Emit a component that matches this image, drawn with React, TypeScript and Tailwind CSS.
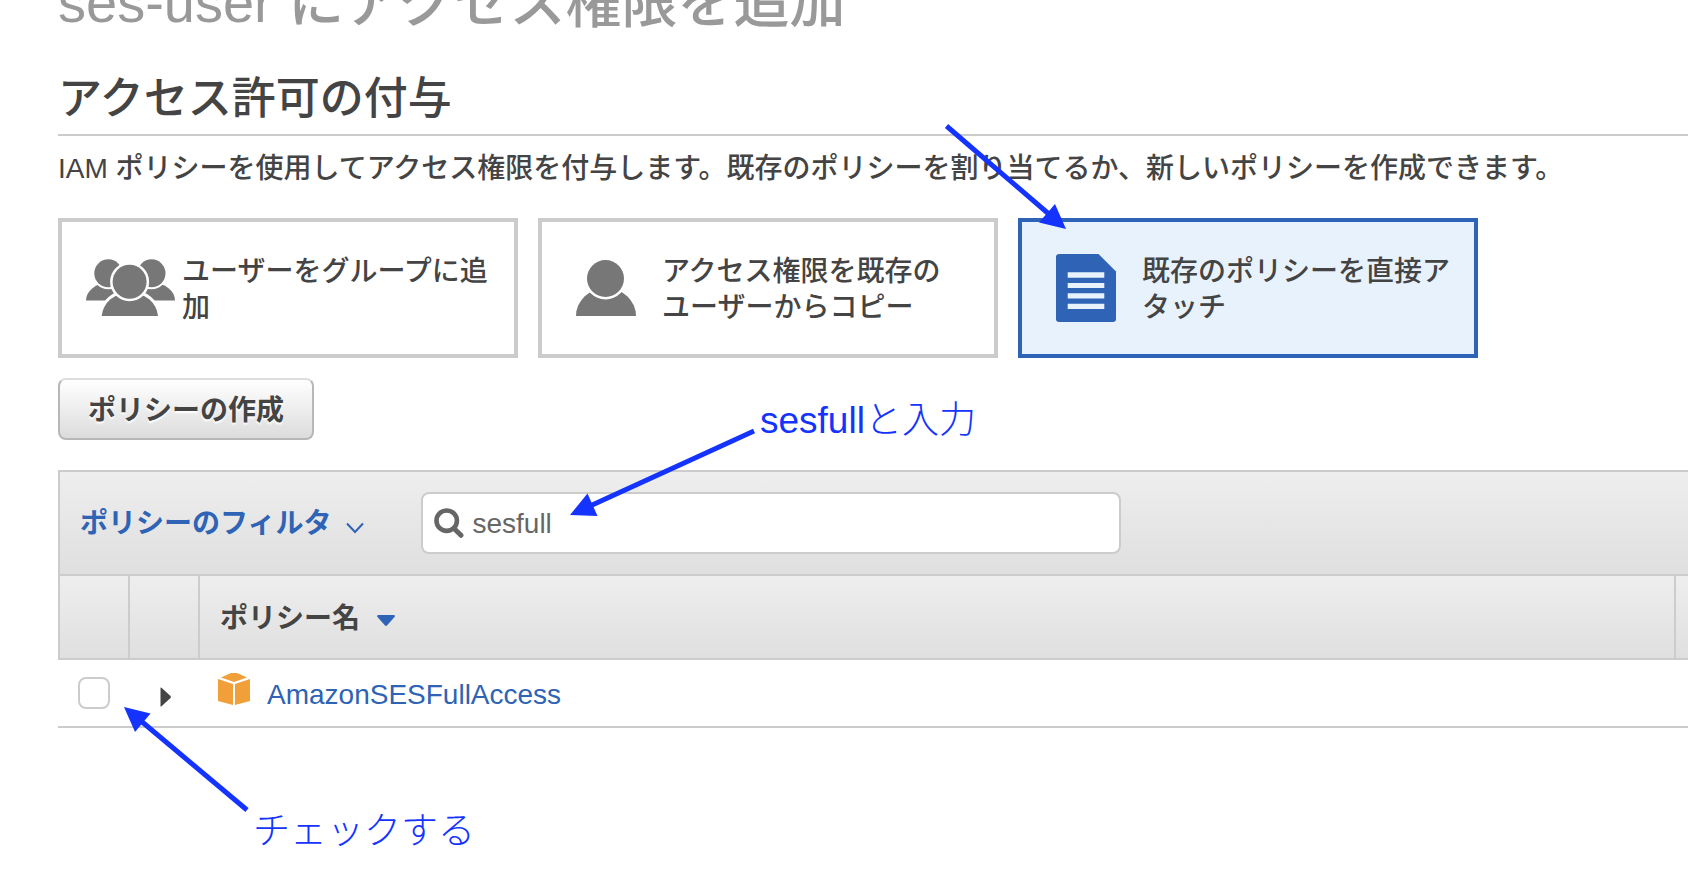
import React, { useState } from 'react';

interface GrantOption {
  id: string;
  label: string;
  icon: React.ReactNode;
}

interface Policy {
  name: string;
  href: string;
}

const GroupIcon = () => (
  <svg width="90" height="72" viewBox="0 0 90 72" className="shrink-0" aria-hidden="true">
    <g fill="#777" stroke="#fff" strokeWidth="5" paintOrder="stroke">
      <path d="M0 48.5 A22.3 17.5 0 0 1 44.6 48.5 Z" stroke="none" />
      <path d="M44.4 48.5 A22.3 17.5 0 0 1 89 48.5 Z" stroke="none" />
      <circle cx="22.3" cy="21.3" r="14" strokeWidth="4" />
      <circle cx="65.5" cy="21.3" r="14" strokeWidth="4" />
      <path d="M15.7 64 A28.2 25 0 0 1 72 64 Z" strokeWidth="6" />
      <circle cx="43.6" cy="29.8" r="17" />
    </g>
  </svg>
);

const UserIcon = () => (
  <svg width="90" height="72" viewBox="0 0 90 72" className="shrink-0" aria-hidden="true">
    <path d="M10 64 A30 28 0 0 1 70 64 Z" fill="#777" />
    <circle cx="39.5" cy="26.5" r="18.5" fill="#777" stroke="#fff" strokeWidth="5" paintOrder="stroke" />
  </svg>
);

const DocumentIcon = () => (
  <svg width="90" height="72" viewBox="0 0 90 72" className="shrink-0" aria-hidden="true">
    <path d="M13 2 H52.5 L70 19.5 V67 Q70 70 67 70 H13 Q10 70 10 67 V5 Q10 2 13 2 Z" fill="#2e63b5" />
    <path d="M21.7 20.3 h36.6 v5.4 h-36.6 Z M21.7 31 h36.6 v5 h-36.6 Z M21.7 41.3 h36.6 v5.2 h-36.6 Z M21.7 51.7 h36.6 v5.3 h-36.6 Z" fill="#e8f2fc" />
  </svg>
);

const SearchIcon = () => (
  <svg width="30" height="30" viewBox="0 0 30 30" className="shrink-0" fill="none" stroke="#666" aria-hidden="true">
    <circle cx="12.7" cy="12.7" r="10.2" strokeWidth="4.6" />
    <path d="M20 20.5 L27 27.3" strokeWidth="5" strokeLinecap="round" />
  </svg>
);

const CubeIcon = () => (
  <svg width="32" height="32" viewBox="0 0 32 32" className="shrink-0" fill="#f19f38" aria-hidden="true">
    <path d="M13 0 H19 L29 4.5 L16 9 L3 4.5 Z" />
    <path d="M0 6 L15 11 V32 L0 28 Z" />
    <path d="M17 11 L32 6 V28 L17 32 Z" />
  </svg>
);

const options: GrantOption[] = [
  { id: 'group', label: 'ユーザーをグループに追\n加', icon: <GroupIcon /> },
  { id: 'copy', label: 'アクセス権限を既存の\nユーザーからコピー', icon: <UserIcon /> },
  { id: 'attach', label: '既存のポリシーを直接ア\nタッチ', icon: <DocumentIcon /> },
];

const policies: Policy[] = [{ name: 'AmazonSESFullAccess', href: '#AmazonSESFullAccess' }];

// Arrows and notes drawn over the console
function Annotations() {
  return (
    <>
      <svg width="1100" height="860" viewBox="0 0 1100 860" className="pointer-events-none absolute left-0 top-0" aria-hidden="true">
        <g stroke="#1433ff" strokeWidth="5">
          <path d="M946.5 126 L1050 215" />
          <path d="M754 431 L590 506" />
          <path d="M247 810 L141 721" />
        </g>
        <g fill="#1433ff">
          <path d="M1066 229 L1039 222.5 L1055 204 Z" />
          <path d="M570 515 L587.5 493.5 L597.5 516 Z" />
          <path d="M124 707 L150.5 713.5 L135 732 Z" />
        </g>
      </svg>
      <p className="absolute left-[760px] top-[397px] whitespace-nowrap text-[37px] leading-12 font-light text-[#1433ff]">sesfullと入力</p>
      <p className="absolute left-[253px] top-[808px] whitespace-nowrap text-[37px] leading-12 font-light text-[#1433ff]">チェックする</p>
    </>
  );
}

export default function App() {
  const [selected, setSelected] = useState('attach');
  const [query, setQuery] = useState('sesfull');
  const [checked, setChecked] = useState<string[]>([]);

  const toggle = (name: string) => {
    setChecked((prev) => (prev.includes(name) ? prev.filter((n) => n !== name) : [...prev, name]));
  };

  const visible = policies.filter((p) => p.name.toLowerCase().includes(query.toLowerCase()));

  return (
    <div
      lang="ja"
      className="relative min-h-screen overflow-hidden bg-white pl-[58px] font-['Liberation_Sans','Noto_Sans_CJK_JP',sans-serif] text-[28px] leading-9 font-medium text-[#444]"
    >
      <h1 className="-mt-[29px] whitespace-nowrap text-[56px] leading-[64px] font-medium text-[#999]">ses-user にアクセス権限を追加</h1>

      <h2 className="mt-8 border-b-2 border-[#ccc] pb-[3px] text-[44px] leading-[64px] font-medium">アクセス許可の付与</h2>
      <p className="mt-[15px] whitespace-nowrap">
        IAM ポリシーを使用してアクセス権限を付与します。既存のポリシーを割り当てるか、新しいポリシーを作成できます。
      </p>

      {/* Grant method */}
      <div className="mt-[31px] flex gap-5">
        {options.map((option) => (
          <button
            key={option.id}
            type="button"
            aria-pressed={selected === option.id}
            onClick={() => setSelected(option.id)}
            className={`flex w-[460px] items-start gap-[6px] border-4 pt-[30px] pb-7 pl-6 text-left ${
              selected === option.id ? 'border-[#2e63b5] bg-[#e8f2fc]' : 'border-[#ccc] bg-white'
            }`}
          >
            {option.icon}
            <span className="pt-[2px] whitespace-pre">{option.label}</span>
          </button>
        ))}
      </div>

      <button
        type="button"
        className="mt-5 block rounded-lg border-2 border-[#b7b7b7] border-t-[#ddd] bg-linear-to-b from-white to-[#dcdcdc] px-7 pt-[13px] pb-[9px] font-bold text-shadow-[0_2px_2px_#fff]"
      >
        ポリシーの作成
      </button>

      {/* Policy table */}
      <div className="mt-[30px]">
        <div className="flex items-center border-2 border-r-0 border-[#ccc] bg-linear-to-b from-[#eee] to-[#dfdfdf] py-5 pl-5">
          <button type="button" className="flex items-center gap-[15px] pt-[2px] font-bold text-[#2e63b5]">
            ポリシーのフィルタ
            <svg width="18" height="12" viewBox="0 0 18 12" fill="none" stroke="currentColor" strokeWidth="2" className="mt-2" aria-hidden="true">
              <path d="M1 1.5 L9 10 L17 1.5" />
            </svg>
          </button>
          <div className="ml-[57px] flex w-[700px] items-center gap-2 rounded-lg border-2 border-[#ccc] bg-white py-[11px] pl-[11px] pr-3">
            <SearchIcon />
            <input
              type="text"
              aria-label="ポリシーの検索"
              value={query}
              onChange={(e) => setQuery(e.target.value)}
              className="h-9 min-w-0 flex-1 pt-[2px] text-[#666] outline-none"
            />
          </div>
        </div>

        <table className="w-full table-fixed border-separate border-spacing-0">
          <colgroup>
            <col className="w-[72px]" />
            <col className="w-[70px]" />
            <col />
            <col className="w-[12px]" />
          </colgroup>
          <thead>
            <tr className="h-[84px] bg-linear-to-b from-[#eee] to-[#dfdfdf]">
              <th className="border-x-2 border-b-2 border-[#ccc]"></th>
              <th className="border-r-2 border-b-2 border-[#ccc]"></th>
              <th className="border-r-2 border-b-2 border-[#ccc] pt-[3px] pl-5 text-left">
                <button type="button" className="flex items-center gap-[17px] font-bold">
                  ポリシー名
                  <svg width="18" height="11" viewBox="0 0 18 11" fill="#2e63b5" className="mt-1" aria-hidden="true">
                    <path d="M1 0 H17 Q18.5 0.5 17.5 2 L10 10.5 Q9 11.3 8 10.5 L0.5 2 Q-0.5 0.5 1 0 Z" />
                  </svg>
                </button>
              </th>
              <th className="border-b-2 border-[#ccc]"></th>
            </tr>
          </thead>
          <tbody>
            {visible.map((policy) => (
              <tr key={policy.name} className="h-[68px]">
                <td className="border-b-2 border-[#ccc] pl-5">
                  <input
                    type="checkbox"
                    aria-label={policy.name}
                    checked={checked.includes(policy.name)}
                    onChange={() => toggle(policy.name)}
                    className="block size-8 appearance-none rounded-lg border-2 border-[#ccc] bg-white checked:bg-[#2e63b5]"
                  />
                </td>
                <td className="border-b-2 border-[#ccc] pl-[30px]">
                  <button type="button" aria-label="詳細を表示" className="mt-2 block">
                    <svg width="11" height="20" viewBox="0 0 11 20" fill="#444" aria-hidden="true">
                      <path d="M0.5 1 Q0.5 0 1.5 0.7 L10.5 9 Q11.2 10 10.5 11 L1.5 19.3 Q0.5 20 0.5 19 Z" />
                    </svg>
                  </button>
                </td>
                <td className="border-b-2 border-[#ccc] pl-[18px]">
                  <div className="flex items-start gap-[17px]">
                    <CubeIcon />
                    <a href={policy.href} className="pt-1 text-[#2e63b5]">
                      {policy.name}
                    </a>
                  </div>
                </td>
                <td className="border-b-2 border-[#ccc]"></td>
              </tr>
            ))}
          </tbody>
        </table>
      </div>

      <Annotations />
    </div>
  );
}
